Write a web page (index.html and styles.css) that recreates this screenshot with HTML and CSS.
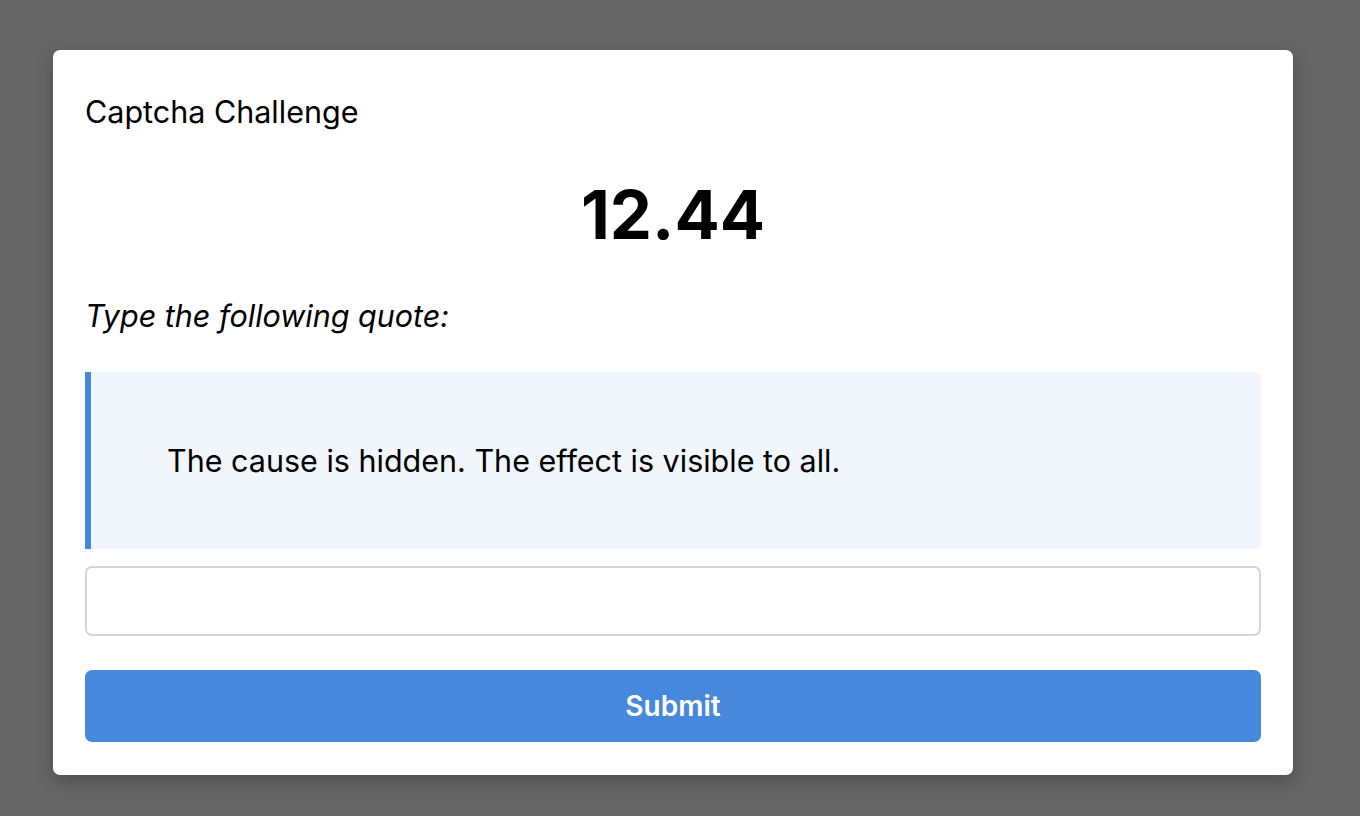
FILE: index.html
```html
<!DOCTYPE html>
<html lang="en">
<head>
<meta charset="utf-8">
<title>Captcha Challenge</title>
<link rel="stylesheet" href="styles.css">
</head>
<body>
<div class="card">
  <h2 class="title">Captcha Challenge</h2>
  <div class="timer">12.44</div>
  <p class="prompt">Type the following quote:</p>
  <blockquote class="quote">The cause is hidden. The effect is visible to all.</blockquote>
  <input class="answer" type="text" aria-label="Quote">
  <button class="submit" type="button">Submit</button>
</div>
</body>
</html>
```

FILE: styles.css
```css
html, body {
  margin: 0;
  padding: 0;
  height: 100%;
}
body {
  background: #666666;
  font-family: Inter, "Noto Sans", "Liberation Sans", sans-serif;
  color: #000;
  padding: 50px 67px 0 53px;
  box-sizing: border-box;
}
.card {
  background: #fff;
  border-radius: 7px;
  box-shadow: 0 6px 20px rgba(0,0,0,0.25);
  padding: 32px 32px 33px 32px;
  display: flex;
  flex-direction: column;
}
.title {
  margin: 13px 0 0 0;
  font-size: 30.5px;
  font-weight: 400;
  line-height: 34px;
}
.timer {
  margin-top: 46px;
  text-align: center;
  font-size: 67px;
  font-weight: 700;
  line-height: 80px;
}
.prompt {
  margin: 44px 0 0 0;
  font-size: 30.5px;
  font-style: italic;
  line-height: 34px;
}
.quote {
  margin: 39px 0 0 0;
  background: #f1f6fd;
  border-left: 6px solid #4689dc;
  border-radius: 0 6px 6px 0;
  padding: 72px 40px 71px 76px;
  font-size: 30.5px;
  line-height: 34px;
}
.answer {
  margin-top: 17px;
  height: 70px;
  box-sizing: border-box;
  border: 2px solid #d3d5d8;
  border-radius: 7px;
  font: inherit;
  font-size: 26px;
  padding: 0 16px;
  outline: none;
}
.submit {
  margin-top: 34px;
  height: 72px;
  border: none;
  border-radius: 7px;
  background: #4689dc;
  color: #fff;
  font-family: inherit;
  font-size: 28px;
  font-weight: 600;
  cursor: pointer;
}
```
